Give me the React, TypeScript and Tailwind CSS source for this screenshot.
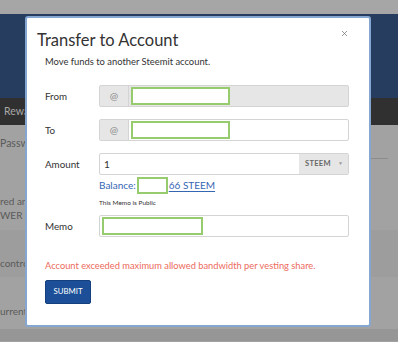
import { X } from "lucide-react";

const font = { fontFamily: "Lato, 'Liberation Sans', sans-serif" };

function GreenBox({ className }: { className: string }) {
  return <div className={`border-2 border-[#97cc6e] bg-white ${className}`} />;
}

function FieldRow({ label, children }: { label: string; children: React.ReactNode }) {
  return (
    <div className="flex h-[22px] items-center">
      <div className="w-[54px] text-[9.8px] text-[#333]">{label}</div>
      {children}
    </div>
  );
}

export default function App() {
  return (
    <div className="relative h-[342px] w-[398px] overflow-hidden bg-[#a2a2a2]" style={font}>
      {/* dimmed page behind the modal */}
      <div className="h-[14px] bg-[#a6a6a6]" />
      <div className="h-[84px] bg-[#263d5f]" />
      <div className="flex h-[27px] items-center bg-[#303030] pl-[4px] text-[10.5px] text-[#a8a8a8]">Rewards</div>
      <div className="flex h-[33px] items-center pt-[4px] text-[10.5px] text-[#5a5a5a]">Password</div>
      <div className="ml-[366px] h-px w-[22px] bg-[#8c8c8c]" />
      <div className="flex h-[71px] flex-col justify-center pt-[26px] text-[10px] leading-[14px] text-[#5a5a5a]">
        <div>red anything</div>
        <div>WER in a</div>
      </div>
      <div className="flex h-[47px] items-center bg-[#9d9d9d] pt-[20px] text-[10px] text-[#5a5a5a]">control</div>
      <div className="flex h-[52px] items-center pt-[16px] text-[10px] text-[#5a5a5a]">urrently</div>
      <div className="h-[12px] bg-[#969696]" />

      {/* modal */}
      <div className="absolute left-[25px] top-[16px] h-[311px] w-[346px] rounded-[3px] border-2 border-[#86a6d2] bg-white">
        <button className="absolute right-[20px] top-[11px] text-[#777]">
          <X className="h-[9px] w-[9px]" strokeWidth={2} />
        </button>
        <div className="pl-[10px] pt-[11px]">
          <div className="h-[22px] text-[16.5px] leading-[22px] text-[#333]">Transfer to Account</div>
        </div>
        <div className="mt-[4px] pl-[18px]">
          <div className="h-[14px] text-[9.4px] leading-[14px] text-[#333]">
            Move funds to another Steemit account.
          </div>
          <div className="mt-[16px] flex flex-col gap-[12px]">
            <FieldRow label="From">
              <div className="flex h-[22px] w-[250px] rounded-[2px] border border-[#d4d4d4] bg-[#e6e6e6]">
                <div className="flex w-[29px] items-center justify-center border-r border-[#d4d4d4] text-[10px] text-[#888]">@</div>
                <div className="flex items-center pl-[2px]">
                  <GreenBox className="h-[18px] w-[99px]" />
                </div>
              </div>
            </FieldRow>
            <FieldRow label="To">
              <div className="flex h-[22px] w-[250px] rounded-[2px] border border-[#d4d4d4] bg-white">
                <div className="flex w-[29px] items-center justify-center border-r border-[#d4d4d4] bg-[#e6e6e6] text-[10px] text-[#888]">@</div>
                <div className="flex items-center pl-[2px]">
                  <GreenBox className="h-[18px] w-[99px]" />
                </div>
              </div>
            </FieldRow>
            <FieldRow label="Amount">
              <div className="flex h-[22px] w-[250px] rounded-[2px] border border-[#d4d4d4] bg-white">
                <div className="flex flex-1 items-center pl-[4px] text-[10px] text-[#333]">1</div>
                <div className="flex w-[49px] items-center justify-between bg-[#e6e6e6] pl-[6px] pr-[5px]">
                  <span className="text-[7.5px] font-bold tracking-[0.3px] text-[#666]">STEEM</span>
                  <span className="text-[5px] text-[#999]">▼</span>
                </div>
              </div>
            </FieldRow>
          </div>
          <div className="ml-[54px] mt-[2px] flex h-[17px] items-center text-[10px] text-[#3466b4]">
            <span>Balance:</span>
            <GreenBox className="ml-[1px] h-[17px] w-[31px]" />
            <span className="ml-[1px] underline underline-offset-2">66 STEEM</span>
          </div>
          <div className="ml-[54px] mt-[3px] h-[12px] text-[6.5px] leading-[12px] text-[#333]">This Memo is Public</div>
          <div className="mt-[6px]">
            <FieldRow label="Memo">
              <div className="flex h-[22px] w-[250px] items-center rounded-[2px] border border-[#d4d4d4] bg-white pl-[2px]">
                <GreenBox className="h-[18px] w-[101px]" />
              </div>
            </FieldRow>
          </div>
          <div className="mt-[22px] h-[14px] text-[9.3px] leading-[14px] text-[#ec6a5c]">
            Account exceeded maximum allowed bandwidth per vesting share.
          </div>
          <button className="mt-[7px] flex h-[24px] w-[46px] items-center justify-center rounded-[2px] border border-[#15407e] bg-[#1c4f98] text-[7.8px] text-white">
            SUBMIT
          </button>
        </div>
      </div>
    </div>
  );
}
